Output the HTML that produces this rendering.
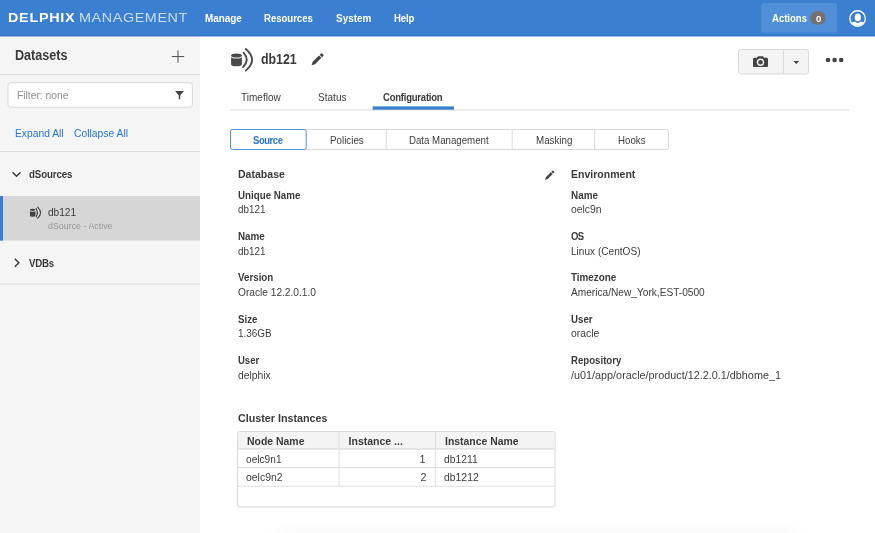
<!DOCTYPE html>
<html><head><meta charset="utf-8"><title>Delphix Management</title>
<style>
*{box-sizing:border-box;margin:0;padding:0}
html,body{width:875px;height:533px;overflow:hidden;background:#fff;font-family:"Liberation Sans",sans-serif;color:#333}
.a{position:absolute}
#txt{position:absolute;left:0;top:0;width:875px;height:533px;will-change:transform}
.t{position:absolute;white-space:nowrap;transform-origin:0 0}
</style></head><body>
<div id="hdr" class="a" style="left:0;top:0;width:875px;height:37px;background:#3b7fd1"></div>
<div id="side" class="a" style="left:0;top:37px;width:200px;height:496px;background:#f5f5f5"></div>
<div id="main" class="a" style="left:200px;top:37px;width:675px;height:496px;background:#fff"></div>
<svg class="a" style="left:0;top:0" width="875" height="533" viewBox="0 0 875 533">
<!-- header -->
<rect x="0" y="35" width="875" height="1.500" fill="#3276cc"/>
<rect x="0" y="36.500" width="200" height="0.500" fill="#f5f5f5"/>
<rect x="200" y="36.500" width="675" height="0.500" fill="#fff"/>
<rect x="761.400" y="3" width="75.600" height="29.600" rx="2" fill="#5190d8"/>
<rect x="810.200" y="11.300" width="15.600" height="13.500" rx="6.750" fill="#74716f"/>
<g fill="#fff"><circle cx="857.600" cy="18.500" r="7.750" fill="none" stroke="#fff" stroke-width="1.300"/><ellipse cx="857.800" cy="17.400" rx="3.100" ry="3.800"/><path d="M851.700 22.600Q853 21.500 855.200 21.700Q856.500 23 857.700 23Q858.900 23 860.200 21.700Q862.400 21.500 863.600 22.600A7.300 7.300 0 0 1 851.700 22.600z"/></g>
<!-- sidebar -->
<path d="M178 50.400v12.300M171.800 56.550h12.400" stroke="#505050" stroke-width="1" fill="none"/>
<rect x="0" y="74" width="200" height="1" fill="#dcdcdc"/>
<rect x="8" y="82.700" width="184.400" height="24.500" rx="2.500" fill="#fff" stroke="#d8d8d8" stroke-width="1"/>
<path d="M175.100 91h8.800l-3.700 4.400v3.900h-1.400v-3.900z" fill="#444"/>
<rect x="0" y="151" width="200" height="1" fill="#dcdcdc"/>
<path d="M12.500 172.300l4 4 4-4" fill="none" stroke="#3a3a3a" stroke-width="1.400"/>
<rect x="0" y="196" width="200" height="44.600" fill="#d6d6d6"/>
<rect x="0" y="196" width="3" height="44.600" fill="#3b7fd1"/>
<g fill="#444"><ellipse cx="32.700" cy="209.800" rx="2.750" ry="1.100"/><path d="M29.950 210.700A2.750 1.100 0 0 0 35.450 210.700V215.700A2.750 1.100 0 0 1 29.950 215.700z"/><path d="M36.200 208.600Q38.400 212.700 36.200 216.800M37.700 207.200Q43.400 212.700 37.700 218.200" fill="none" stroke="#444" stroke-width="1.150" stroke-linecap="round"/></g>
<path d="M14.800 258.800l4 4-4 4" fill="none" stroke="#3a3a3a" stroke-width="1.400"/>
<rect x="0" y="283.600" width="200" height="1" fill="#dcdcdc"/>
<!-- main head -->
<g transform="translate(231.100 48)"><ellipse cx="5.4" cy="7.5" rx="5.4" ry="2" fill="#4a4a4a"/><path d="M0 8.600A5.400 2 0 0 0 10.800 8.600V16.300A5.400 2 0 0 1 0 16.300z" fill="#4a4a4a"/><path d="M12.400 4.700Q19 11.900 12 19.100M14.700 1Q27.300 11.900 14.700 22.600" fill="none" stroke="#4a4a4a" stroke-width="1.900" stroke-linecap="round"/></g>
<g transform="translate(0 0.250)"><path fill="#444" d="M311.60 65.00L312.66 61.54L319.02 55.17L321.43 57.58L315.06 63.94zM319.66 54.53L321.00 53.19Q321.57 52.63 322.14 53.19L323.41 54.46Q323.97 55.03 323.41 55.60L322.07 56.94z"/></g>
<rect x="738.500" y="49.500" width="70" height="24.500" rx="2.500" fill="#f4f4f4" stroke="#d9d9d9"/>
<rect x="783" y="50" width="1" height="23.500" fill="#dadada"/>
<path d="M758 56.300l-1.200 1.400h-2.500c-.7 0-1.300.6-1.300 1.300v6.700c0 .7.600 1.300 1.300 1.300h12.400c.7 0 1.300-.6 1.300-1.300v-6.700c0-.7-.6-1.300-1.300-1.300h-2.500l-1.200-1.400z" fill="#444"/><circle cx="760.500" cy="62.200" r="3.700" fill="#f4f4f4"/><circle cx="760.500" cy="62.200" r="2.300" fill="#484848"/>
<path d="M793.400 61h5.800l-2.900 3.100z" fill="#444"/>
<circle cx="828" cy="60" r="2.300" fill="#444"/><circle cx="834.600" cy="60" r="2.300" fill="#444"/><circle cx="841.200" cy="60" r="2.300" fill="#444"/>
<rect x="230" y="109.500" width="619" height="1.200" fill="#e2e2e2"/>
<rect x="372.600" y="106.400" width="81.400" height="3.300" fill="#3b7fd1"/>
<!-- sub tabs -->
<rect x="230.500" y="129.500" width="438" height="20" rx="2" fill="#fff" stroke="#d8d8d8"/>
<path d="M386.200 130v19M512.200 130v19M594.700 130v19" stroke="#d8d8d8" stroke-width="1"/>
<rect x="230.500" y="129.500" width="75.700" height="20" rx="2" fill="#fff" stroke="#4a90e2"/>
<path fill="#444" d="M545.00 179.90L545.83 177.20L550.79 172.23L552.67 174.11L547.70 179.07zM551.29 171.74L552.34 170.69Q552.78 170.25 553.22 170.69L554.21 171.68Q554.65 172.12 554.21 172.56L553.16 173.61z"/>
<!-- table -->
<rect x="237.500" y="431.500" width="317.500" height="75.500" rx="2" fill="#fff" stroke="#d8d8d8"/>
<path d="M238 434a2 2 0 0 1 2-2h312.500a2 2 0 0 1 2 2v15H238z" fill="#f4f4f4"/>
<path d="M238 449h316.500" stroke="#d4d4d4"/>
<path d="M238 467.500h316.500M238 486.200h316.500M339 432v54.200M435.400 432v54.200" stroke="#dedede"/>
</svg>
<div class="a" style="left:285px;top:546px;width:505px;height:30px;box-shadow:0 0 22px 6px rgba(0,0,0,0.10)"></div>
<div id="txt">
<div class="t" style="left:8.00px;top:10.85px;font-size:13.6px;line-height:13.6px;letter-spacing:0.664px;transform:scaleX(1.0600);color:#fff;font-weight:bold">DELPHIX</div>
<div class="t" style="left:78.94px;top:10.85px;font-size:13.6px;line-height:13.6px;letter-spacing:0.536px;transform:scaleX(1.0600);color:#c9dcf4">MANAGEMENT</div>
<div class="t" style="left:205.10px;top:12.75px;font-size:10.8px;line-height:10.8px;transform:scaleX(0.9156);color:#fff;font-weight:bold">Manage</div>
<div class="t" style="left:264.40px;top:12.75px;font-size:10.8px;line-height:10.8px;letter-spacing:-0.047px;transform:scaleX(0.8900);color:#fff;font-weight:bold">Resources</div>
<div class="t" style="left:335.70px;top:12.75px;font-size:10.8px;line-height:10.8px;transform:scaleX(0.9204);color:#fff;font-weight:bold">System</div>
<div class="t" style="left:393.60px;top:12.75px;font-size:10.8px;line-height:10.8px;letter-spacing:-0.144px;transform:scaleX(0.8900);color:#fff;font-weight:bold">Help</div>
<div class="t" style="left:772.40px;top:12.75px;font-size:10.8px;line-height:10.8px;letter-spacing:-0.044px;transform:scaleX(0.8900);color:#fff;font-weight:bold">Actions</div>
<div class="t" style="left:816.00px;top:13.80px;font-size:9.7px;line-height:9.7px;color:#fff;font-weight:bold">0</div>
<div class="t" style="left:15.20px;top:48.75px;font-size:13.8px;line-height:13.8px;transform:scaleX(0.9128);color:#3a3a3a;font-weight:bold">Datasets</div>
<div class="t" style="left:17.30px;top:89.65px;font-size:11px;line-height:11px;transform:scaleX(0.9343);color:#8e8e8e">Filter: none</div>
<div class="t" style="left:15.20px;top:127.70px;font-size:10.9px;line-height:10.9px;transform:scaleX(0.9449);color:#2874d2">Expand All</div>
<div class="t" style="left:74.40px;top:127.70px;font-size:10.9px;line-height:10.9px;transform:scaleX(0.9494);color:#2874d2">Collapse All</div>
<div class="t" style="left:28.60px;top:168.70px;font-size:10.9px;line-height:10.9px;letter-spacing:-0.116px;transform:scaleX(0.8900);color:#3a3a3a;font-weight:bold">dSources</div>
<div class="t" style="left:47.60px;top:206.70px;font-size:10.9px;line-height:10.9px;transform:scaleX(0.9263);color:#3c3c3c">db121</div>
<div class="t" style="left:47.60px;top:220.95px;font-size:9.4px;line-height:9.4px;transform:scaleX(0.9451);color:#979797">dSource - Active</div>
<div class="t" style="left:28.60px;top:257.70px;font-size:10.9px;line-height:10.9px;letter-spacing:-0.301px;transform:scaleX(0.8900);color:#3a3a3a;font-weight:bold">VDBs</div>
<div class="t" style="left:261.00px;top:52.75px;font-size:13.8px;line-height:13.8px;transform:scaleX(0.8955);color:#3a3a3a;font-weight:bold">db121</div>
<div class="t" style="left:241.00px;top:91.80px;font-size:10.7px;line-height:10.7px;transform:scaleX(0.9381);color:#3c3c3c">Timeflow</div>
<div class="t" style="left:318.00px;top:91.80px;font-size:10.7px;line-height:10.7px;transform:scaleX(0.9414);color:#3c3c3c">Status</div>
<div class="t" style="left:383.40px;top:91.80px;font-size:10.7px;line-height:10.7px;letter-spacing:-0.250px;transform:scaleX(0.8900);color:#3a3a3a;font-weight:bold">Configuration</div>
<div class="t" style="left:253.00px;top:134.80px;font-size:10.7px;line-height:10.7px;letter-spacing:-0.516px;transform:scaleX(0.8900);color:#2874d2;font-weight:bold">Source</div>
<div class="t" style="left:329.60px;top:134.80px;font-size:10.7px;line-height:10.7px;transform:scaleX(0.9155);color:#3c3c3c">Policies</div>
<div class="t" style="left:409.40px;top:134.80px;font-size:10.7px;line-height:10.7px;transform:scaleX(0.9050);color:#3c3c3c">Data Management</div>
<div class="t" style="left:535.60px;top:134.80px;font-size:10.7px;line-height:10.7px;transform:scaleX(0.9134);color:#3c3c3c">Masking</div>
<div class="t" style="left:618.40px;top:134.80px;font-size:10.7px;line-height:10.7px;transform:scaleX(0.9082);color:#3c3c3c">Hooks</div>
<div class="t" style="left:237.60px;top:168.35px;font-size:11.6px;line-height:11.6px;transform:scaleX(0.9097);color:#3a3a3a;font-weight:bold">Database</div>
<div class="t" style="left:237.60px;top:189.80px;font-size:10.7px;line-height:10.7px;transform:scaleX(0.9129);color:#3a3a3a;font-weight:bold">Unique Name</div>
<div class="t" style="left:237.60px;top:203.80px;font-size:10.7px;line-height:10.7px;transform:scaleX(0.9202);color:#3c3c3c">db121</div>
<div class="t" style="left:237.60px;top:230.80px;font-size:10.7px;line-height:10.7px;transform:scaleX(0.9189);color:#3a3a3a;font-weight:bold">Name</div>
<div class="t" style="left:237.60px;top:245.80px;font-size:10.7px;line-height:10.7px;transform:scaleX(0.9202);color:#3c3c3c">db121</div>
<div class="t" style="left:237.60px;top:271.80px;font-size:10.7px;line-height:10.7px;transform:scaleX(0.9138);color:#3a3a3a;font-weight:bold">Version</div>
<div class="t" style="left:237.60px;top:286.80px;font-size:10.7px;line-height:10.7px;transform:scaleX(0.9507);color:#3c3c3c">Oracle 12.2.0.1.0</div>
<div class="t" style="left:237.60px;top:313.80px;font-size:10.7px;line-height:10.7px;transform:scaleX(0.9048);color:#3a3a3a;font-weight:bold">Size</div>
<div class="t" style="left:237.60px;top:327.80px;font-size:10.7px;line-height:10.7px;transform:scaleX(0.9248);color:#3c3c3c">1.36GB</div>
<div class="t" style="left:237.60px;top:354.80px;font-size:10.7px;line-height:10.7px;letter-spacing:-0.003px;transform:scaleX(0.8900);color:#3a3a3a;font-weight:bold">User</div>
<div class="t" style="left:237.60px;top:369.80px;font-size:10.7px;line-height:10.7px;transform:scaleX(0.9674);color:#3c3c3c">delphix</div>
<div class="t" style="left:237.60px;top:412.35px;font-size:11.6px;line-height:11.6px;transform:scaleX(0.9251);color:#3a3a3a;font-weight:bold">Cluster Instances</div>
<div class="t" style="left:570.60px;top:168.35px;font-size:11.6px;line-height:11.6px;transform:scaleX(0.9085);color:#3a3a3a;font-weight:bold">Environment</div>
<div class="t" style="left:570.60px;top:189.80px;font-size:10.7px;line-height:10.7px;transform:scaleX(0.9258);color:#3a3a3a;font-weight:bold">Name</div>
<div class="t" style="left:570.60px;top:203.80px;font-size:10.7px;line-height:10.7px;transform:scaleX(0.9699);color:#3c3c3c">oelc9n</div>
<div class="t" style="left:570.60px;top:230.80px;font-size:10.7px;line-height:10.7px;letter-spacing:-0.706px;transform:scaleX(0.8900);color:#3a3a3a;font-weight:bold">OS</div>
<div class="t" style="left:570.60px;top:245.80px;font-size:10.7px;line-height:10.7px;transform:scaleX(0.9440);color:#3c3c3c">Linux (CentOS)</div>
<div class="t" style="left:570.60px;top:271.80px;font-size:10.7px;line-height:10.7px;transform:scaleX(0.9237);color:#3a3a3a;font-weight:bold">Timezone</div>
<div class="t" style="left:570.60px;top:286.80px;font-size:10.7px;line-height:10.7px;transform:scaleX(0.9487);color:#3c3c3c">America/New_York,EST-0500</div>
<div class="t" style="left:570.60px;top:313.80px;font-size:10.7px;line-height:10.7px;transform:scaleX(0.9066);color:#3a3a3a;font-weight:bold">User</div>
<div class="t" style="left:570.60px;top:327.80px;font-size:10.7px;line-height:10.7px;transform:scaleX(0.9738);color:#3c3c3c">oracle</div>
<div class="t" style="left:570.60px;top:354.80px;font-size:10.7px;line-height:10.7px;transform:scaleX(0.9020);color:#3a3a3a;font-weight:bold">Repository</div>
<div class="t" style="left:570.60px;top:369.80px;font-size:10.7px;line-height:10.7px;transform:scaleX(1.0124);color:#3c3c3c">/u01/app/oracle/product/12.2.0.1/dbhome_1</div>
<div class="t" style="left:247.00px;top:435.90px;font-size:10.5px;line-height:10.5px;transform:scaleX(0.9944);color:#3a3a3a;font-weight:bold">Node Name</div>
<div class="t" style="left:348.60px;top:435.90px;font-size:10.5px;line-height:10.5px;color:#3a3a3a;font-weight:bold">Instance ...</div>
<div class="t" style="left:444.60px;top:435.90px;font-size:10.5px;line-height:10.5px;transform:scaleX(0.9936);color:#3a3a3a;font-weight:bold">Instance Name</div>
<div class="t" style="left:246.40px;top:453.80px;font-size:10.7px;line-height:10.7px;transform:scaleX(0.9495);color:#3c3c3c">oelc9n1</div>
<div class="t" style="left:246.40px;top:471.80px;font-size:10.7px;line-height:10.7px;transform:scaleX(0.9762);color:#3c3c3c">oelc9n2</div>
<div class="t" style="left:419.60px;top:453.80px;font-size:10.7px;line-height:10.7px;color:#3c3c3c">1</div>
<div class="t" style="left:420.40px;top:471.80px;font-size:10.7px;line-height:10.7px;color:#3c3c3c">2</div>
<div class="t" style="left:443.60px;top:453.80px;font-size:10.7px;line-height:10.7px;transform:scaleX(0.9678);color:#3c3c3c">db1211</div>
<div class="t" style="left:443.60px;top:471.80px;font-size:10.7px;line-height:10.7px;transform:scaleX(0.9743);color:#3c3c3c">db1212</div>
</div>
</body></html>
